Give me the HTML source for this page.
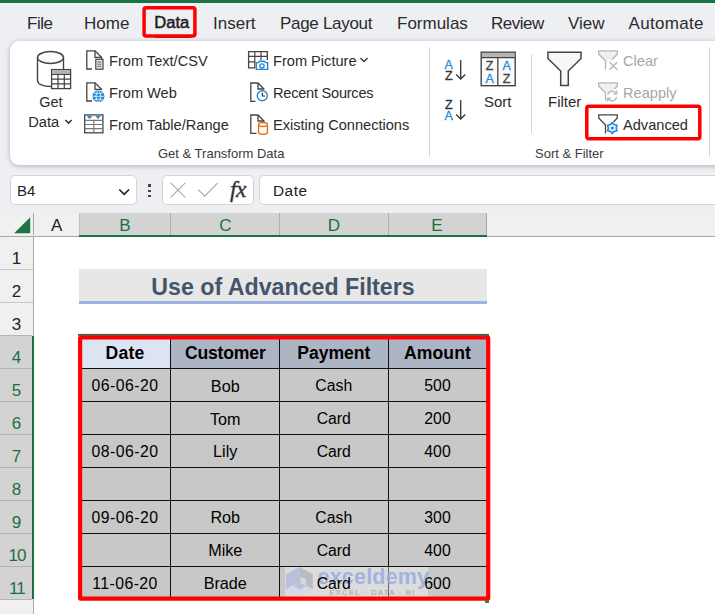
<!DOCTYPE html>
<html><head><meta charset="utf-8">
<style>
*{box-sizing:border-box;margin:0;padding:0}
html,body{width:715px;height:614px;overflow:hidden;background:#fff;font-family:"Liberation Sans",sans-serif;color:#242424}
.abs{position:absolute}
.t{position:absolute;white-space:nowrap;line-height:1}
#top{left:0;top:0;width:715px;height:213px;background:#eeeff3}
#green{left:0;top:0;width:715px;height:3px;background:#1a7343}
.tab{font-size:17px;top:14.5px;color:#2b2b2b}
#ribbon{left:10px;top:41px;width:720px;height:124px;background:#fff;border-radius:9px;box-shadow:0 1px 5px rgba(0,0,0,.27)}
.rb{font-size:14.6px;color:#2b2b2b}
.gl{font-size:13px;color:#3a3a3a}
.sep{background:#d6d6d6;width:1px}
.redbox{border:3px solid #f00;border-radius:4px}
.hdr{font-size:17px;color:#2b2b2b;text-align:center}
.cell{position:absolute;font-size:16px;color:#1a1a1a;text-align:center;line-height:1;white-space:nowrap}
</style></head><body>
<div class="abs" id="top"></div>
<div class="abs" id="green"></div>
<!-- tabs -->
<div class="t tab" style="left:27px;letter-spacing:-.5px">File</div>
<div class="t tab" style="left:84px">Home</div>
<div class="t tab" style="left:154.300px;font-size:16.600px;top:14.700px;color:#1f1f1f;-webkit-text-stroke:.55px #1f1f1f">Data</div>
<div class="t tab" style="left:213px">Insert</div>
<div class="t tab" style="left:280px;letter-spacing:-.3px">Page Layout</div>
<div class="t tab" style="left:397px">Formulas</div>
<div class="t tab" style="left:491px;letter-spacing:-.5px">Review</div>
<div class="t tab" style="left:568px">View</div>
<div class="t tab" style="left:628.5px;letter-spacing:.3px">Automate</div>
<div class="abs" style="left:155px;top:37px;width:36px;height:1px;background:#2a4a3a"></div>
<svg class="abs" style="left:140px;top:4px" width="60" height="36" viewBox="0 0 60 36"><rect x="4.100" y="3.700" width="50.800" height="28.200" rx="2" fill="none" stroke="#f00" stroke-width="3.500"/></svg>
<div class="abs" id="ribbon"></div>
<!-- Get Data big icon -->
<svg class="abs" style="left:34px;top:48px" width="40" height="44" viewBox="0 0 40 44">
 <path d="M3.5 9.5 V32.5 C3.5 36 9 38.5 17 38.500 M29.5 9.5 V21" fill="none" stroke="#444" stroke-width="1.400"/>
 <ellipse cx="16.5" cy="9.5" rx="13" ry="6" fill="#fafafa" stroke="#444" stroke-width="1.4"/>
 <rect x="17.600" y="21.600" width="19" height="19" fill="#fff" stroke="#444" stroke-width="1.300"/>
 <rect x="18.2" y="22.200" width="17.800" height="4" fill="#b0b0b0"/>
 <path d="M17.6 26.5 H36.600 M17.6 31.200 H36.6 M17.6 35.900 H36.6 M24 26.5 V40.600 M30.300 26.5 V40.6" stroke="#444" stroke-width="1.200" fill="none"/>
</svg>
<div class="t rb" style="left:39.200px;top:94.800px;font-size:14.500px">Get</div>
<div class="t rb" style="left:28.200px;top:114.600px;font-size:14.700px">Data</div>
<svg class="abs" style="left:63px;top:118px" width="10" height="8" viewBox="0 0 10 8"><path d="M2.400 2 L5.500 5.100 L8.600 2" fill="none" stroke="#333" stroke-width="1.500"/></svg>

<!-- From Text/CSV -->
<svg class="abs" style="left:84px;top:48px" width="22" height="24" viewBox="0 0 22 24">
 <path d="M8 21 H2.8 V2.800 H11 L17.5 9.300 V11" fill="none" stroke="#444" stroke-width="1.3"/>
 <path d="M11 2.8 V9.3 H17.500" fill="none" stroke="#444" stroke-width="1.3"/>
 <rect x="11.800" y="11.300" width="7.200" height="9.900" fill="#e6e6e6" stroke="#444" stroke-width="1.2"/>
 <path d="M13.500 14 H17.3 M13.5 16.200 H17.3 M13.5 18.400 H17.3" stroke="#666" stroke-width="1"/>
</svg>
<div class="t rb" style="left:109px;top:54px">From Text/CSV</div>
<!-- From Web -->
<svg class="abs" style="left:84px;top:80px" width="22" height="24" viewBox="0 0 22 24">
 <path d="M8 21 H2.8 V2.8 H11 L17.5 9.3 V10" fill="none" stroke="#444" stroke-width="1.3"/>
 <path d="M11 2.8 V9.3 H17.5" fill="none" stroke="#444" stroke-width="1.3"/>
 <circle cx="14.400" cy="16.300" r="6" fill="#1e8ad6"/>
 <path d="M8.400 16.300 H20.400 M14.400 10.300 C11.200 13 11.200 19.600 14.400 22.300 M14.400 10.300 C17.600 13 17.600 19.600 14.400 22.300 M10 12.600 C12.500 14 16.300 14 18.800 12.600 M10 20 C12.500 18.600 16.300 18.600 18.800 20" fill="none" stroke="#fff" stroke-width=".8"/>
</svg>
<div class="t rb" style="left:109px;top:86px">From Web</div>
<!-- From Table/Range -->
<svg class="abs" style="left:83px;top:113px" width="22" height="22" viewBox="0 0 22 22">
 <rect x="1.700" y="1.900" width="18.200" height="17.900" fill="#fff" stroke="#444" stroke-width="1.300"/>
 <path d="M1.700 7.400 H19.900 M1.700 11.500 H19.900 M1.700 15.600 H19.900 M10.800 7.400 V19.800" stroke="#777" stroke-width="1.100" fill="none"/>
 <path d="M3.800 3.100 H9.400 L6.600 6.100 Z M12.300 3.100 H17.900 L15.100 6.100 Z" fill="#1e8ad6"/>
</svg>
<div class="t rb" style="left:109px;top:118px">From Table/Range</div>

<!-- From Picture -->
<svg class="abs" style="left:247px;top:50px" width="23" height="22" viewBox="0 0 23 22">
 <path d="M8 17.900 H1.600 V1.600 H20.300 V10" fill="none" stroke="#444" stroke-width="1.3"/>
 <path d="M1.6 6.400 H20.3 M1.6 11.800 H8.500 M7.800 1.6 V17.9 M14 1.6 V10" fill="none" stroke="#444" stroke-width="1.2"/>
 <path d="M9.300 12.600 H11.500 L12.500 11.300 H17.500 L18.500 12.6 H20.600 V19.400 H9.3 Z" fill="#fff" stroke="#1e8ad6" stroke-width="1.4"/>
 <circle cx="15" cy="15.900" r="2.100" fill="none" stroke="#1e8ad6" stroke-width="1.3"/>
</svg>
<div class="t rb" style="left:273px;top:54px">From Picture</div>
<svg class="abs" style="left:359px;top:56px" width="10" height="8" viewBox="0 0 10 8"><path d="M1.5 2 L5 5.5 L8.5 2" fill="none" stroke="#333" stroke-width="1.3"/></svg>
<!-- Recent Sources -->
<svg class="abs" style="left:248px;top:80px" width="22" height="24" viewBox="0 0 22 24">
 <path d="M7.500 21.300 H2.8 V3 H10 L16 9 V9.500" fill="none" stroke="#444" stroke-width="1.3"/>
 <path d="M10 3 V9 H16" fill="none" stroke="#444" stroke-width="1.3"/>
 <circle cx="14.300" cy="15.700" r="5" fill="#fff" stroke="#1e8ad6" stroke-width="1.4"/>
 <path d="M14.3 12.700 V16 H17" fill="none" stroke="#333" stroke-width="1.2"/>
</svg>
<div class="t rb" style="left:273px;top:86px;letter-spacing:-.25px">Recent Sources</div>
<!-- Existing Connections -->
<svg class="abs" style="left:248px;top:112px" width="22" height="24" viewBox="0 0 22 24">
 <path d="M8.500 21.300 H2.8 V3 H10 L16 9 V10" fill="none" stroke="#444" stroke-width="1.3"/>
 <path d="M10 3 V9 H16" fill="none" stroke="#444" stroke-width="1.3"/>
 <path d="M10.600 12.500 V20.300 C10.6 21.600 12.5 22.300 15 22.3 C17.500 22.3 19.400 21.6 19.4 20.3 V12.5" fill="#fff" stroke="#e07010" stroke-width="1.4"/>
 <ellipse cx="15" cy="12.5" rx="4.400" ry="2" fill="#fff" stroke="#e07010" stroke-width="1.4"/>
</svg>
<div class="t rb" style="left:273px;top:118px">Existing Connections</div>
<div class="t gl" style="left:158px;top:147px">Get &amp; Transform Data</div>
<div class="abs sep" style="left:429px;top:47px;height:110px"></div>

<!-- AZ sort -->
<div class="t" style="left:444.500px;top:59.200px;font-size:12.500px;color:#1e8ad6;-webkit-text-stroke:.3px #1e8ad6">A</div>
<div class="t" style="left:445px;top:70.300px;font-size:12.5px;color:#333;-webkit-text-stroke:.3px #333">Z</div>
<svg class="abs" style="left:455px;top:59px" width="12" height="22" viewBox="0 0 12 22"><path d="M5.700 1 V20 M1.200 15.500 L5.7 20 L10.200 15.5" fill="none" stroke="#333" stroke-width="1.3"/></svg>
<div class="t" style="left:445px;top:98.500px;font-size:12.5px;color:#333;-webkit-text-stroke:.3px #333">Z</div>
<div class="t" style="left:444.5px;top:110px;font-size:12.5px;color:#1e8ad6;-webkit-text-stroke:.3px #1e8ad6">A</div>
<svg class="abs" style="left:455px;top:99px" width="12" height="22" viewBox="0 0 12 22"><path d="M5.7 1 V20 M1.2 15.5 L5.7 20 L10.2 15.5" fill="none" stroke="#333" stroke-width="1.3"/></svg>
<!-- Sort big -->
<svg class="abs" style="left:479px;top:50px" width="38" height="38" viewBox="0 0 38 38">
 <rect x="2.200" y="2.200" width="34" height="33.500" fill="#fafafa" stroke="#444" stroke-width="1.400"/>
 <rect x="2.900" y="2.900" width="32.600" height="4.300" fill="#b4b4b4"/>
 <path d="M2.2 7.700 H36.200 M18.800 7.7 V35.700" stroke="#444" stroke-width="1.3"/>
 <text x="10.600" y="20.400" font-family="Liberation Sans" font-size="12.5" text-anchor="middle" fill="#444" stroke="#444" stroke-width=".3">Z</text>
 <text x="10.6" y="32.600" font-family="Liberation Sans" font-size="12.5" text-anchor="middle" fill="#1e8ad6" stroke="#1e8ad6" stroke-width=".3">A</text>
 <text x="27.600" y="20.4" font-family="Liberation Sans" font-size="12.5" text-anchor="middle" fill="#1e8ad6" stroke="#1e8ad6" stroke-width=".3">A</text>
 <text x="27.6" y="32.6" font-family="Liberation Sans" font-size="12.5" text-anchor="middle" fill="#444" stroke="#444" stroke-width=".3">Z</text>
</svg>
<div class="t rb" style="left:484px;top:93.800px;font-size:15px">Sort</div>
<div class="abs sep" style="left:531px;top:54px;height:79px"></div>
<!-- Filter -->
<svg class="abs" style="left:545px;top:49px" width="40" height="40" viewBox="0 0 40 40">
 <path d="M2.900 3.300 H36 V9.500 L23.300 22 V36.600 H15.700 V22 L2.900 9.500 Z" fill="#f6f6f6" stroke="#444" stroke-width="1.500" stroke-linejoin="miter"/>
</svg>
<div class="t rb" style="left:548px;top:93.800px;font-size:15px">Filter</div>
<!-- Clear -->
<svg class="abs" style="left:596px;top:48px" width="24" height="24" viewBox="0 0 24 24">
 <path d="M9.500 13 L2.700 6 V2.900 H21.300 V6 L15 13 Z" fill="#efefef" stroke="none"/>
 <path d="M9.500 21.800 V13 L2.700 6 V2.900 H21.300 V6 L16 11.500" fill="none" stroke="#b5b5b5" stroke-width="1.300"/>
 <path d="M13.500 14 L21.300 21.800 M21.300 14 L13.500 21.800" stroke="#b5b5b5" stroke-width="1.300"/>
</svg>
<div class="t rb" style="left:623px;top:54px;color:#a6a6a6">Clear</div>
<!-- Reapply -->
<svg class="abs" style="left:596px;top:80px" width="24" height="24" viewBox="0 0 24 24">
 <path d="M9.500 13 L2.700 6 V2.900 H21.300 V6 L15 13 Z" fill="#efefef" stroke="none"/>
 <path d="M9.500 21.300 V13 L2.700 6 V2.900 H21.300 V6 L18.500 9" fill="none" stroke="#b5b5b5" stroke-width="1.300"/>
 <path d="M11.700 15 A4.600 4.600 0 0 1 20.300 13.600 M20.600 10.600 V13.900 H17.300 M20.500 17 A4.600 4.600 0 0 1 11.900 18.400 M11.600 21.400 V18.100 H14.900" fill="none" stroke="#b5b5b5" stroke-width="1.300"/>
</svg>
<div class="t rb" style="left:623px;top:86px;color:#a6a6a6">Reapply</div>
<!-- Advanced -->
<svg class="abs" style="left:596px;top:112px" width="24" height="26" viewBox="0 0 24 26">
 <path d="M9.500 21.400 V13 L2.700 6 V2.900 H21.300 V6 L17.500 10" fill="none" stroke="#444" stroke-width="1.300"/>
 <g transform="translate(16.300,16)" fill="none" stroke="#1e8ad6" stroke-width="1.600" stroke-linejoin="round">
  <path d="M0 -5.400 L1.700 -3.600 L4.700 -2.700 L3.900 0 L4.700 2.700 L1.700 3.600 L0 5.400 L-1.700 3.600 L-4.700 2.700 L-3.900 0 L-4.700 -2.700 L-1.700 -3.600 Z" fill="#eaf4fc"/>
  <circle r="1.500" fill="#1e8ad6" stroke="none"/>
 </g>
</svg>
<div class="t rb" style="left:623px;top:118px">Advanced</div>
<svg class="abs" style="left:583px;top:102px" width="120" height="40" viewBox="0 0 120 40"><rect x="3.800" y="4.300" width="113" height="32.500" rx="2" fill="none" stroke="#f00" stroke-width="3.500"/></svg>
<div class="t gl" style="left:535px;top:147px">Sort &amp; Filter</div>
<div class="abs sep" style="left:709px;top:47px;height:110px"></div>
<!-- formula bar -->
<div class="abs" style="left:10px;top:175px;width:127px;height:30px;background:#fff;border:1px solid #d4d4d4;border-radius:5px"></div>
<div class="t" style="left:17px;top:183px;font-size:15px;color:#222">B4</div>
<svg class="abs" style="left:117px;top:186px" width="14" height="12" viewBox="0 0 14 12"><path d="M2.300 3.500 L7.200 8.400 L12.100 3.500" fill="none" stroke="#222" stroke-width="1.700"/></svg>
<div class="abs" style="left:148px;top:184px;width:2.600px;height:2.600px;background:#444"></div>
<div class="abs" style="left:148px;top:189.500px;width:2.600px;height:2.600px;background:#444"></div>
<div class="abs" style="left:148px;top:194.500px;width:2.600px;height:2.600px;background:#444"></div>
<div class="abs" style="left:162px;top:175px;width:92px;height:30px;background:#fff;border:1px solid #d4d4d4;border-radius:5px"></div>
<svg class="abs" style="left:168px;top:181px" width="20" height="19" viewBox="0 0 20 19"><path d="M2.700 1.800 L17.300 16.400 M17.300 1.800 L2.700 16.400" stroke="#ababab" stroke-width="1.200" fill="none"/></svg>
<svg class="abs" style="left:196px;top:181px" width="24" height="18" viewBox="0 0 24 18"><path d="M2.200 8.700 L8.700 15.200 L21.500 2.200" stroke="#ababab" stroke-width="1.200" fill="none"/></svg>
<div class="t" style="left:230px;top:177.500px;font-family:'Liberation Serif',serif;font-style:italic;font-size:23.500px;color:#333;-webkit-text-stroke:.35px #333"><span style="letter-spacing:-.5px">f</span>x</div>
<div class="abs" style="left:259px;top:175px;width:470px;height:30px;background:#fff;border:1px solid #d4d4d4;border-radius:5px"></div>
<div class="t" style="left:273px;top:182.800px;font-size:15.400px;letter-spacing:.5px;color:#222">Date</div>
<!-- sheet -->
<div class="abs" style="left:0px;top:213px;width:715px;height:24px;background:#f0f0f0"></div>
<div class="abs" style="left:79px;top:213px;width:408px;height:24px;background:#d3d3d3"></div>
<div class="abs" style="left:79px;top:235px;width:408px;height:2px;background:#1d6f42"></div>
<div class="abs" style="left:0px;top:236px;width:79px;height:1px;background:#a8a8a8"></div>
<div class="abs" style="left:487px;top:236px;width:230px;height:1px;background:#a8a8a8"></div>
<div class="abs" style="left:33px;top:213px;width:1px;height:22px;background:#a8a8a8"></div>
<div class="abs" style="left:79px;top:213px;width:1px;height:22px;background:#c0c0c0"></div>
<div class="abs" style="left:170px;top:213px;width:1px;height:22px;background:#b0b0b0"></div>
<div class="abs" style="left:279px;top:213px;width:1px;height:22px;background:#b0b0b0"></div>
<div class="abs" style="left:388px;top:213px;width:1px;height:22px;background:#b0b0b0"></div>
<div class="abs" style="left:486px;top:213px;width:1px;height:22px;background:#a8a8a8"></div>
<svg class="abs" style="left:13px;top:216px" width="19" height="19" viewBox="0 0 19 19"><path d="M17.200 1.300 V17.200 H1.100 Z" fill="#217346"/></svg>
<div class="t hdr" style="left:36.7px;width:40px;top:217px;color:#222">A</div>
<div class="t hdr" style="left:105px;width:40px;top:217px;color:#1d6f42">B</div>
<div class="t hdr" style="left:205.5px;width:40px;top:217px;color:#1d6f42">C</div>
<div class="t hdr" style="left:314px;width:40px;top:217px;color:#1d6f42">D</div>
<div class="t hdr" style="left:416.8px;width:40px;top:217px;color:#1d6f42">E</div>
<div class="abs" style="left:0px;top:237px;width:33px;height:380px;background:#f0f0f0"></div>
<div class="abs" style="left:0px;top:335.78px;width:33px;height:263.68px;background:#d3d3d3"></div>
<div class="abs" style="left:33px;top:237px;width:1px;height:380px;background:#ababab"></div>
<div class="abs" style="left:32px;top:336px;width:2px;height:263px;background:#1d6f42"></div>
<div class="abs" style="left:0px;top:269px;width:33px;height:1px;background:#c8c8c8"></div>
<div class="abs" style="left:0px;top:302px;width:33px;height:1px;background:#c8c8c8"></div>
<div class="abs" style="left:0px;top:335px;width:32px;height:1px;background:#b4b4b4"></div>
<div class="abs" style="left:0px;top:368px;width:32px;height:1px;background:#b4b4b4"></div>
<div class="abs" style="left:0px;top:401px;width:32px;height:1px;background:#b4b4b4"></div>
<div class="abs" style="left:0px;top:434px;width:32px;height:1px;background:#b4b4b4"></div>
<div class="abs" style="left:0px;top:467px;width:32px;height:1px;background:#b4b4b4"></div>
<div class="abs" style="left:0px;top:500px;width:32px;height:1px;background:#b4b4b4"></div>
<div class="abs" style="left:0px;top:533px;width:32px;height:1px;background:#b4b4b4"></div>
<div class="abs" style="left:0px;top:566px;width:32px;height:1px;background:#b4b4b4"></div>
<div class="abs" style="left:0px;top:599px;width:32px;height:1px;background:#b4b4b4"></div>
<div class="t hdr" style="left:0;width:33px;top:250.2px;color:#222">1</div>
<div class="t hdr" style="left:0;width:33px;top:283.16px;color:#222">2</div>
<div class="t hdr" style="left:0;width:33px;top:316.12px;color:#222">3</div>
<div class="t hdr" style="left:0;width:33px;top:349.08px;color:#1d6f42">4</div>
<div class="t hdr" style="left:0;width:33px;top:382.04px;color:#1d6f42">5</div>
<div class="t hdr" style="left:0;width:33px;top:415px;color:#1d6f42">6</div>
<div class="t hdr" style="left:0;width:33px;top:447.96px;color:#1d6f42">7</div>
<div class="t hdr" style="left:0;width:33px;top:480.92px;color:#1d6f42">8</div>
<div class="t hdr" style="left:0;width:33px;top:513.88px;color:#1d6f42">9</div>
<div class="t hdr" style="left:0;width:33px;top:546.84px;color:#1d6f42;letter-spacing:-.9px;text-indent:1px">10</div>
<div class="t hdr" style="left:0;width:33px;top:579.8px;color:#1d6f42;letter-spacing:-.9px;text-indent:1px">11</div>
<div class="abs" style="left:79px;top:269px;width:408px;height:33px;background:#e7e7e7"></div>
<div class="abs" style="left:79px;top:301px;width:408px;height:3px;background:#9db3e0"></div>
<div class="t" style="left:79px;width:408px;text-align:center;top:275.5px;font-size:23.2px;font-weight:bold;color:#44546a">Use of Advanced Filters</div>
<div class="abs" style="left:79px;top:336px;width:408px;height:263px;background:#c8c8c8"></div>
<div class="abs" style="left:79px;top:336px;width:408px;height:33px;background:#adb4c4"></div>
<div class="abs" style="left:79px;top:336px;width:92px;height:33px;background:#dce3f2"></div>
<div class="abs" style="left:79px;top:368px;width:408px;height:1px;background:#111"></div>
<div class="abs" style="left:79px;top:401px;width:408px;height:1px;background:#111"></div>
<div class="abs" style="left:79px;top:434px;width:408px;height:1px;background:#111"></div>
<div class="abs" style="left:79px;top:467px;width:408px;height:1px;background:#111"></div>
<div class="abs" style="left:79px;top:500px;width:408px;height:1px;background:#111"></div>
<div class="abs" style="left:79px;top:533px;width:408px;height:1px;background:#111"></div>
<div class="abs" style="left:79px;top:566px;width:408px;height:1px;background:#111"></div>
<div class="abs" style="left:170px;top:336px;width:1.3px;height:263px;background:#111"></div>
<div class="abs" style="left:279px;top:336px;width:1.3px;height:263px;background:#111"></div>
<div class="abs" style="left:387.8px;top:336px;width:1.3px;height:263px;background:#111"></div>
<div class="abs" style="left:285px;top:567px;width:143px;height:32px;background:rgba(255,255,255,.36)"></div>
<svg class="abs" style="left:286px;top:567px" width="28" height="31" viewBox="0 0 28 31"><g opacity=".75"><path d="M0 7.300 L13.400 0 V14.800 L0 22.400 Z" fill="#a9b8e0"/><path d="M13.400 0 L26.800 7.300 V22.400 L13.400 14.800 Z" fill="#aeb2bc"/><path d="M0 22.400 L13.400 14.800 L26.800 22.400 L13.400 29.600 Z" fill="#d2d9e8"/><path d="M8.500 12.500 L14.500 9.500 V16 L8.500 19.500 Z" fill="#b4b8c2"/><path d="M14.500 9.500 L20 12.500 V19 L14.500 16 Z" fill="#d5dae6"/><path d="M8.500 19.500 L14.500 16 L20 19 L14 22.500 Z" fill="#a9b8e0"/></g></svg>
<div class="t" style="left:317.500px;top:566.500px;font-size:21.500px;font-weight:bold;color:#98ade0;opacity:.85;letter-spacing:.2px">exceldemy</div>
<div class="t" style="left:329.500px;top:588.500px;font-size:7.500px;color:#a2a2a2;letter-spacing:1.350px">EXCEL · DATA · BI</div>
<div class="cell" style="left:79px;width:92px;top:344.88px;font-weight:bold;font-size:17.6px;letter-spacing:0.22px;color:#000">Date</div>
<div class="cell" style="left:171px;width:108.5px;top:344.88px;font-weight:bold;font-size:17.6px;letter-spacing:-0.19px;color:#000">Customer</div>
<div class="cell" style="left:279.5px;width:108.5px;top:344.88px;font-weight:bold;font-size:17.6px;letter-spacing:-0.06px;color:#000">Payment</div>
<div class="cell" style="left:388px;width:99px;top:344.88px;font-weight:bold;font-size:17.6px;letter-spacing:0.07px;color:#000">Amount</div>
<div class="cell" style="left:79px;width:92px;top:377.94px;color:#000;font-size:15.8px;letter-spacing:.45px">06-06-20</div>
<div class="cell" style="left:171px;width:108.5px;top:377.54px;color:#000;font-size:16.2px">Bob</div>
<div class="cell" style="left:279.5px;width:108.5px;top:377.94px;color:#000;font-size:15.8px">Cash</div>
<div class="cell" style="left:388px;width:99px;top:377.94px;color:#000;font-size:15.8px">500</div>
<div class="cell" style="left:171px;width:108.5px;top:410.5px;color:#000;font-size:16.2px">Tom</div>
<div class="cell" style="left:279.5px;width:108.5px;top:410.9px;color:#000;font-size:15.8px">Card</div>
<div class="cell" style="left:388px;width:99px;top:410.9px;color:#000;font-size:15.8px">200</div>
<div class="cell" style="left:79px;width:92px;top:443.86px;color:#000;font-size:15.8px;letter-spacing:.45px">08-06-20</div>
<div class="cell" style="left:171px;width:108.5px;top:443.46px;color:#000;font-size:16.2px">Lily</div>
<div class="cell" style="left:279.5px;width:108.5px;top:443.86px;color:#000;font-size:15.8px">Card</div>
<div class="cell" style="left:388px;width:99px;top:443.86px;color:#000;font-size:15.8px">400</div>
<div class="cell" style="left:79px;width:92px;top:509.78px;color:#000;font-size:15.8px;letter-spacing:.45px">09-06-20</div>
<div class="cell" style="left:171px;width:108.5px;top:509.38px;color:#000;font-size:16.2px">Rob</div>
<div class="cell" style="left:279.5px;width:108.5px;top:509.78px;color:#000;font-size:15.8px">Cash</div>
<div class="cell" style="left:388px;width:99px;top:509.78px;color:#000;font-size:15.8px">300</div>
<div class="cell" style="left:171px;width:108.5px;top:542.34px;color:#000;font-size:16.2px">Mike</div>
<div class="cell" style="left:279.5px;width:108.5px;top:542.74px;color:#000;font-size:15.8px">Card</div>
<div class="cell" style="left:388px;width:99px;top:542.74px;color:#000;font-size:15.8px">400</div>
<div class="cell" style="left:79px;width:92px;top:575.7px;color:#000;font-size:15.8px;letter-spacing:.45px">11-06-20</div>
<div class="cell" style="left:171px;width:108.5px;top:575.3px;color:#000;font-size:16.2px">Brade</div>
<div class="cell" style="left:279.5px;width:108.5px;top:575.7px;color:#000;font-size:15.8px">Card</div>
<div class="cell" style="left:388px;width:99px;top:575.7px;color:#000;font-size:15.8px">600</div>
<svg class="abs" style="left:70px;top:330px" width="430" height="280" viewBox="0 0 430 280"><rect x="8" y="3.9" width="411" height="2" fill="#2f6f4a"/><rect x="10.1" y="7.5" width="408.1" height="261.1" rx=".6" fill="none" stroke="#f00" stroke-width="4.2"/></svg>
<div class="abs" style="left:485px;top:600px;width:4px;height:3px;background:#4a7a3a"></div>
</body></html>
